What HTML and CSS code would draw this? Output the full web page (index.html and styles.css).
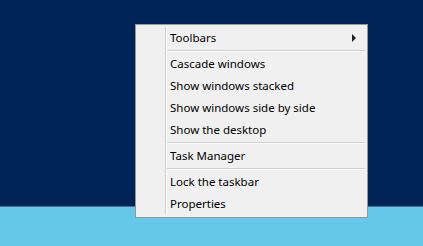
FILE: index.html
```html
<!DOCTYPE html>
<html lang="en">
<head>
  <meta charset="UTF-8">
  <title>Taskbar context menu</title>
  <link rel="stylesheet" href="styles.css">
</head>
<body>
  <div class="desktop"></div>
  <div class="taskbar"></div>

  <ul class="context-menu">
    <li class="item has-sub">Toolbars <span class="arrow"></span></li>
    <li class="sep"></li>
    <li class="item">Cascade windows</li>
    <li class="item">Show windows stacked</li>
    <li class="item">Show windows side by side</li>
    <li class="item">Show the desktop</li>
    <li class="sep"></li>
    <li class="item">Task Manager</li>
    <li class="sep"></li>
    <li class="item">Lock the taskbar</li>
    <li class="item">Properties</li>
  </ul>
</body>
</html>
```

FILE: styles.css
```css
html, body {
  margin: 0;
  padding: 0;
  height: 100%;
  overflow: hidden;
}

body {
  font-family: "Segoe UI", "Noto Sans", sans-serif;
  font-size: 11.5px;
  display: flex;
  flex-direction: column;
  position: relative;
}

.desktop {
  height: 206px;
  background-color: #012456;
  border-bottom: 1px solid #4b6f91;
}

.taskbar {
  flex: 1;
  background-color: #66c8e8;
}

.context-menu {
  position: absolute;
  left: 135px;
  top: 24px;
  width: 227px;
  margin: 0;
  padding: 2px 2px 2px 2px;
  list-style: none;
  background-color: #f0f0f0;
  border: 1px solid #979797;
  color: #000;
}

/* gutter line on the left */
.context-menu::before {
  content: "";
  position: absolute;
  left: 29px;
  top: 2px;
  bottom: 2px;
  width: 0;
  border-left: 1px solid #cfcfcf;
  border-right: 1px solid #ffffff;
}

.item {
  height: 22px;
  line-height: 22px;
  padding-left: 32px;
  display: flex;
  align-items: center;
  justify-content: space-between;
}

.sep {
  height: 4px;
  margin-left: 29px;
  position: relative;
}

.sep::after {
  content: "";
  position: absolute;
  left: 0;
  right: 0;
  top: 1px;
  border-top: 1px solid #cfcfcf;
  border-bottom: 1px solid #ffffff;
}

.arrow {
  width: 0;
  height: 0;
  margin-right: 9px;
  border-top: 4px solid transparent;
  border-bottom: 4px solid transparent;
  border-left: 4px solid #222;
}
```
